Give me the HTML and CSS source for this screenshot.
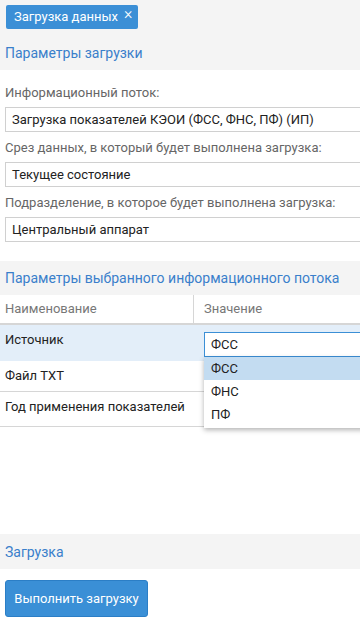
FILE: index.html
```html
<!DOCTYPE html>
<html lang="ru">
<head>
<meta charset="utf-8">
<link rel="stylesheet" href="styles.css">
</head>
<body>
<div class="page">
  <div class="top">
    <div class="tab"><span class="tab-title">Загрузка данных</span><span class="tab-close">×</span></div>
    <h2 class="section-title">Параметры загрузки</h2>
  </div>
  <div class="form">
    <div class="field">
      <div class="label">Информационный поток:</div>
      <div class="input">Загрузка показателей КЭОИ (ФСС, ФНС, ПФ) (ИП)</div>
    </div>
    <div class="field">
      <div class="label">Срез данных, в который будет выполнена загрузка:</div>
      <div class="input">Текущее состояние</div>
    </div>
    <div class="field">
      <div class="label">Подразделение, в которое будет выполнена загрузка:</div>
      <div class="input">Центральный аппарат</div>
    </div>
  </div>
  <div class="band"><h2 class="section-title">Параметры выбранного информационного потока</h2></div>
  <div class="grid">
    <div class="row head">
      <div class="c1">Наименование</div>
      <div class="c2">Значение</div>
    </div>
    <div class="row sel">
      <div class="c1">Источник</div>
      <div class="c2">
        <div class="select">ФСС</div>
        <div class="dropdown">
          <div class="opt active">ФСС</div>
          <div class="opt">ФНС</div>
          <div class="opt">ПФ</div>
        </div>
      </div>
    </div>
    <div class="row">
      <div class="c1">Файл TXT</div>
      <div class="c2"></div>
    </div>
    <div class="row r3">
      <div class="c1">Год применения показателей</div>
      <div class="c2"></div>
    </div>
  </div>
  <div class="band band-last"><h2 class="section-title">Загрузка</h2></div>
  <div class="actions"><button class="btn">Выполнить загрузку</button></div>
</div>
</body>
</html>
```

FILE: styles.css
```css
html, body {
  margin: 0;
  padding: 0;
  background: #fff;
}
body {
  font-family: Roboto, "Noto Sans", sans-serif;
  font-size: 13px;
  color: #222;
  overflow: hidden;
}
.page {
  width: 360px;
  overflow: hidden;
}
.top {
  background: #f4f4f4;
  height: 70px;
  padding: 5px 0 0 6px;
  box-sizing: border-box;
}
.tab {
  display: inline-flex;
  align-items: flex-start;
  background: #3b8fd6;
  color: #fff;
  height: 24px;
  padding: 0 6px 0 8px;
  border-radius: 2px;
  box-sizing: border-box;
}
.tab-title {
  line-height: 24px;
  font-size: 13px;
}
.tab-close {
  font-size: 16px;
  line-height: 15px;
  margin-left: 6px;
  margin-top: 1px;
  font-weight: 300;
}
.section-title {
  margin: 0;
  font-size: 14px;
  font-weight: normal;
  color: #3a7fcb;
  white-space: nowrap;
}
.top .section-title {
  margin-top: 16px;
  margin-left: -1px;
}
.form {
  padding: 14px 0 19px 5px;
}
.field + .field {
  margin-top: 7px;
}
.label {
  color: #666;
  line-height: 18px;
  margin-bottom: 5px;
}
.input {
  width: 380px;
  height: 25px;
  box-sizing: border-box;
  border: 1px solid #d0d0d0;
  padding: 0 0 0 6px;
  line-height: 23px;
  color: #222;
  background: #fff;
}
.band {
  background: #f4f4f4;
  height: 34px;
  padding: 0 5px;
  display: flex;
  align-items: center;
}
.grid {
  height: 239px;
}
.row {
  display: flex;
  height: 30px;
  border-bottom: 1px solid #d6d6d6;
}
.row.head {
  height: 28px;
  border-bottom: 2px solid #d6d6d6;
  color: #777;
}
.row.head .c1 {
  border-right: 1px solid #d6d6d6;
  line-height: 28px;
  padding-top: 0;
}
.row.head .c2 {
  line-height: 28px;
}
.c1 {
  width: 194px;
  flex: 0 0 194px;
  box-sizing: border-box;
  padding: 7px 0 0 5px;
  line-height: 16px;
}
.c2 {
  flex: 1 1 auto;
  min-width: 0;
  padding: 0 0 0 10px;
  position: relative;
}
.row.sel {
  height: 36px;
  background: #e3eef9;
  border-bottom: none;
}
.row.r3 {
  height: 34px;
}
.select {
  margin-top: 7px;
  width: 200px;
  height: 25px;
  box-sizing: border-box;
  border: 1px solid #3b8fd6;
  background: #fff;
  padding-left: 6px;
  line-height: 23px;
}
.dropdown {
  position: absolute;
  left: 10px;
  top: 32px;
  width: 200px;
  background: #fff;
  box-shadow: 0 2px 5px rgba(0, 0, 0, 0.3);
  z-index: 2;
  padding-bottom: 2px;
}
.opt {
  height: 23px;
  line-height: 23px;
  padding-left: 7px;
}
.opt.active {
  background: #c3dcf1;
}
.band-last {
  height: 35px;
}
.actions {
  padding: 11px 0 0 5px;
}
.btn {
  width: 143px;
  height: 37px;
  background: #3a8fd6;
  border: 1px solid #2b7ec6;
  border-radius: 3px;
  color: #fff;
  font-family: Roboto, "Noto Sans", sans-serif;
  font-size: 13px;
  padding: 0;
}
```
